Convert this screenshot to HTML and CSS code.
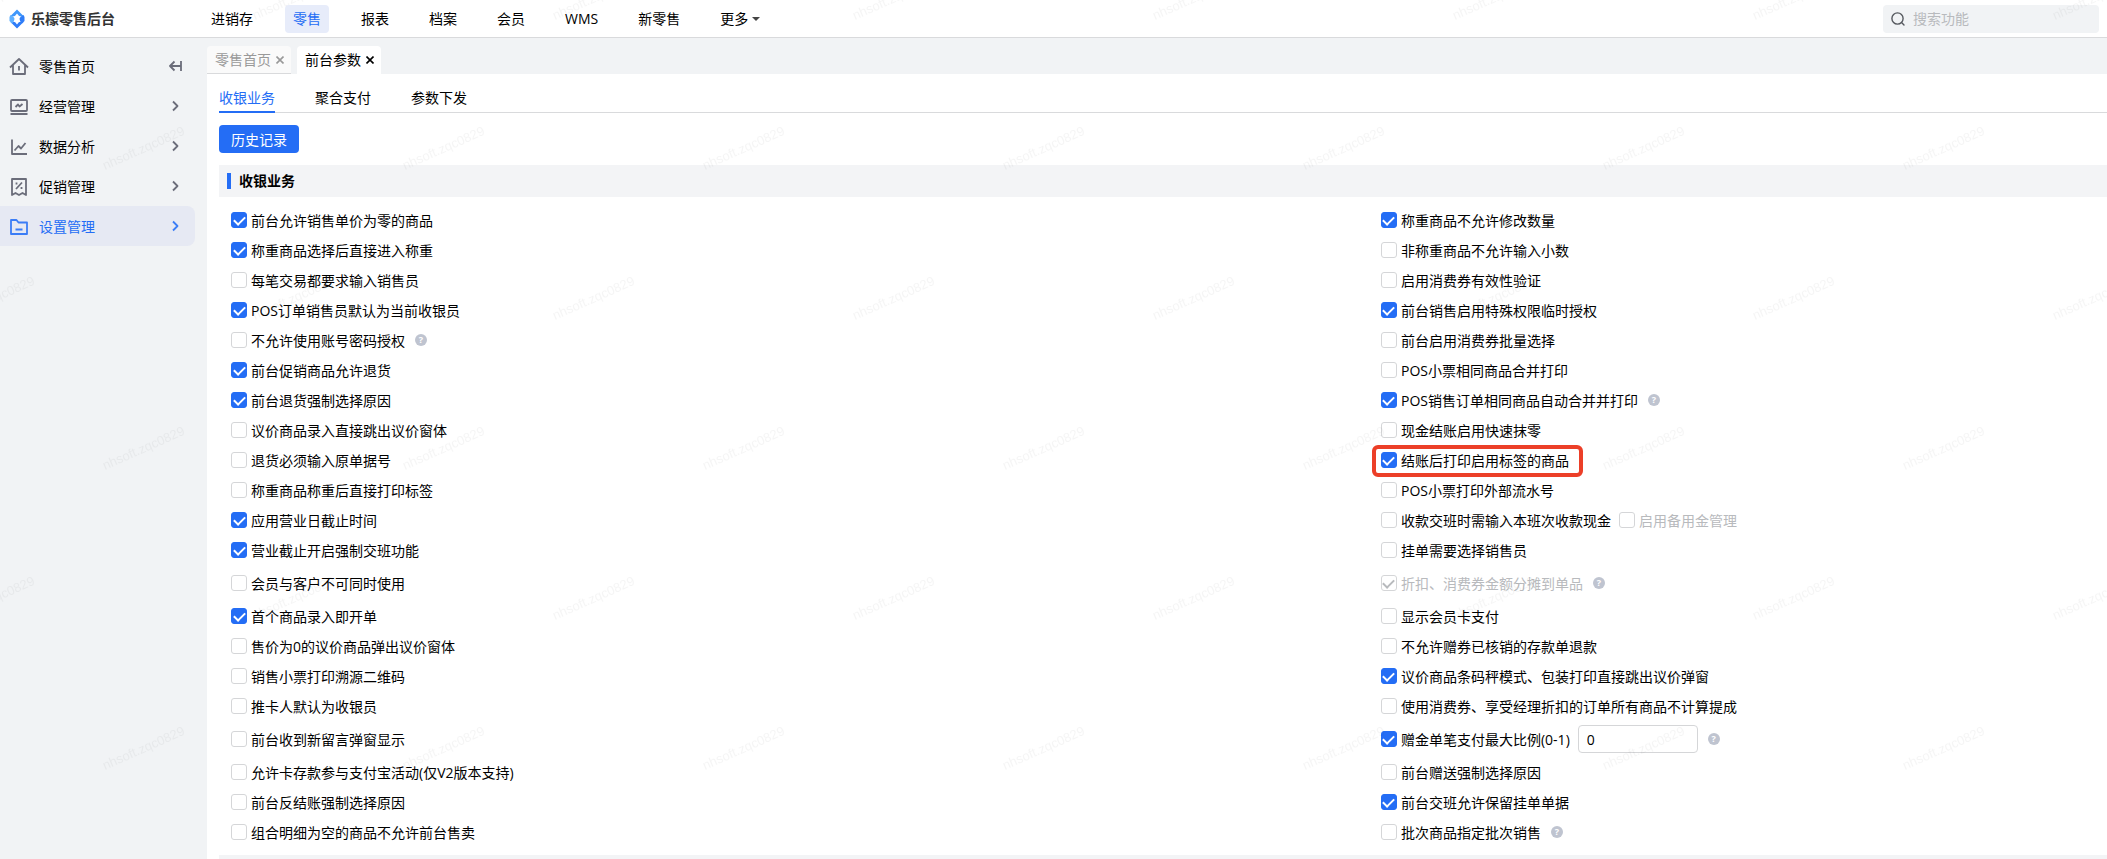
FILE: index.html
```html
<!DOCTYPE html>
<html lang="zh-CN">
<head>
    <meta charset="UTF-8">
    <meta name="viewport" content="width=device-width, initial-scale=1.0">
    <title>乐檬零售后台</title>
    <link rel="stylesheet" href="styles.css">
</head>
<body>
    <header class="header">
        <a class="logo" href="#">
            <svg width="16" height="20" viewBox="0 0 16 20">
                <path d="M8 0.5 L14.5 7 Q10 8.5 8 4.5 Q6 8.5 1.5 7 Z" fill="#3f97fb"/>
                <path d="M8 19.5 L1.5 13 Q6 11.5 8 15.5 Q10 11.5 14.5 13 Z" fill="#2f7df8"/>
                <path d="M1.5 6 Q5.5 8 5.5 10 Q5.5 12 3 14.5 L0.5 12 V8 Z" fill="#5fb0ff"/>
                <path d="M14.5 6 Q10.5 8 10.5 10 Q10.5 12 13 14.5 L15.5 12 V8 Z" fill="#2f7df8"/>
            </svg>
            <span>乐檬零售后台</span>
        </a>
        <nav class="nav">
            <a href="#">进销存</a>
            <a href="#" class="active">零售</a>
            <a href="#">报表</a>
            <a href="#">档案</a>
            <a href="#">会员</a>
            <a href="#">WMS</a>
            <a href="#">新零售</a>
            <a href="#">更多<span class="caret"></span></a>
        </nav>
        <div class="search">
            <svg width="14" height="14" viewBox="0 0 14 14" fill="none" stroke="#55585e" stroke-width="1.4" stroke-linecap="round">
                <circle cx="6.5" cy="6.5" r="5.6"/>
                <path d="M10.8 10.8 L13 13"/>
            </svg>
            <input type="text" placeholder="搜索功能" aria-label="搜索功能">
        </div>
    </header>

    <div class="body">
        <aside class="sidebar">
            <a href="#" class="menu-item">
                <svg class="icon" viewBox="0 0 20 20">
                    <path d="M1 11.5 L10 3 L19 11.5 M4 9 V18 H16 V9 M10 10 V14.5"/>
                </svg>
                <span>零售首页</span>
                <svg class="arrow" viewBox="0 0 14 14">
                    <path d="M12 2 V12 M12 7 H1 M5.5 2.5 L1 7 L5.5 11.5"/>
                </svg>
            </a>
            <a href="#" class="menu-item">
                <svg class="icon" viewBox="0 0 20 20">
                    <rect x="2" y="4" width="16" height="11" rx="1"/>
                    <path d="M1.5 18 H18.5 M6.5 11 L9 8.5 L10.5 10.5 L13.5 8"/>
                </svg>
                <span>经营管理</span>
                <svg class="arrow" viewBox="0 0 14 14"><path d="M4 2.5 L8.5 7 L4 11.5"/></svg>
            </a>
            <a href="#" class="menu-item">
                <svg class="icon" viewBox="0 0 20 20">
                    <path d="M3 3.5 V18 H18 M5.5 14.5 L9.5 10 L12 12.5 L16.5 7"/>
                </svg>
                <span>数据分析</span>
                <svg class="arrow" viewBox="0 0 14 14"><path d="M4 2.5 L8.5 7 L4 11.5"/></svg>
            </a>
            <a href="#" class="menu-item">
                <svg class="icon" viewBox="0 0 20 20">
                    <path d="M3 3 H17 V19 L13.5 17 L10 19 L6.5 17 L3 19 Z M7 13 L13 6.5 M7.5 6.5 V8.5 M12.5 11 V13"/>
                </svg>
                <span>促销管理</span>
                <svg class="arrow" viewBox="0 0 14 14"><path d="M4 2.5 L8.5 7 L4 11.5"/></svg>
            </a>
            <a href="#" class="menu-item active">
                <svg class="icon" viewBox="0 0 20 20">
                    <path d="M2 18 V4 H7.5 L9.5 6.5 H18 V18 Z M6.5 13.5 H13.5"/>
                </svg>
                <span>设置管理</span>
                <svg class="arrow" viewBox="0 0 14 14"><path d="M4 2.5 L8.5 7 L4 11.5"/></svg>
            </a>
        </aside>

        <main class="main">
            <div class="page-tabs">
                <a href="#" class="page-tab">零售首页
                    <svg viewBox="0 0 8 8"><path d="M0.5 0.5 L7.5 7.5 M7.5 0.5 L0.5 7.5"/></svg>
                </a>
                <a href="#" class="page-tab active">前台参数
                    <svg viewBox="0 0 8 8"><path d="M0.5 0.5 L7.5 7.5 M7.5 0.5 L0.5 7.5"/></svg>
                </a>
            </div>
            <div class="content">
                <div class="sub-tabs">
                    <a href="#" class="active">收银业务</a>
                    <a href="#">聚合支付</a>
                    <a href="#">参数下发</a>
                </div>
                <button type="button" class="btn">历史记录</button>
                <h2 class="section-title">收银业务</h2>
                <div class="params">
                    <ul>
                        <li><label><input type="checkbox" checked><span>前台允许销售单价为零的商品</span></label></li>
                        <li><label><input type="checkbox" checked><span>称重商品选择后直接进入称重</span></label></li>
                        <li><label><input type="checkbox"><span>每笔交易都要求输入销售员</span></label></li>
                        <li><label><input type="checkbox" checked><span>POS订单销售员默认为当前收银员</span></label></li>
                        <li><label><input type="checkbox"><span>不允许使用账号密码授权</span></label><i class="help">?</i></li>
                        <li><label><input type="checkbox" checked><span>前台促销商品允许退货</span></label></li>
                        <li><label><input type="checkbox" checked><span>前台退货强制选择原因</span></label></li>
                        <li><label><input type="checkbox"><span>议价商品录入直接跳出议价窗体</span></label></li>
                        <li><label><input type="checkbox"><span>退货必须输入原单据号</span></label></li>
                        <li><label><input type="checkbox"><span>称重商品称重后直接打印标签</span></label></li>
                        <li><label><input type="checkbox" checked><span>应用营业日截止时间</span></label></li>
                        <li><label><input type="checkbox" checked><span>营业截止开启强制交班功能</span></label></li>
                        <li class="tall"><label><input type="checkbox"><span>会员与客户不可同时使用</span></label></li>
                        <li><label><input type="checkbox" checked><span>首个商品录入即开单</span></label></li>
                        <li><label><input type="checkbox"><span>售价为0的议价商品弹出议价窗体</span></label></li>
                        <li><label><input type="checkbox"><span>销售小票打印溯源二维码</span></label></li>
                        <li><label><input type="checkbox"><span>推卡人默认为收银员</span></label></li>
                        <li class="tall"><label><input type="checkbox"><span>前台收到新留言弹窗显示</span></label></li>
                        <li><label><input type="checkbox"><span>允许卡存款参与支付宝活动(仅V2版本支持)</span></label></li>
                        <li><label><input type="checkbox"><span>前台反结账强制选择原因</span></label></li>
                        <li><label><input type="checkbox"><span>组合明细为空的商品不允许前台售卖</span></label></li>
                    </ul>
                    <ul>
                        <li><label><input type="checkbox" checked><span>称重商品不允许修改数量</span></label></li>
                        <li><label><input type="checkbox"><span>非称重商品不允许输入小数</span></label></li>
                        <li><label><input type="checkbox"><span>启用消费券有效性验证</span></label></li>
                        <li><label><input type="checkbox" checked><span>前台销售启用特殊权限临时授权</span></label></li>
                        <li><label><input type="checkbox"><span>前台启用消费券批量选择</span></label></li>
                        <li><label><input type="checkbox"><span>POS小票相同商品合并打印</span></label></li>
                        <li><label><input type="checkbox" checked><span>POS销售订单相同商品自动合并并打印</span></label><i class="help">?</i></li>
                        <li><label><input type="checkbox"><span>现金结账启用快速抹零</span></label></li>
                        <li><label class="marked"><input type="checkbox" checked><span>结账后打印启用标签的商品</span></label></li>
                        <li><label><input type="checkbox"><span>POS小票打印外部流水号</span></label></li>
                        <li>
                            <label><input type="checkbox"><span>收款交班时需输入本班次收款现金</span></label>
                            <label class="disabled"><input type="checkbox" disabled><span>启用备用金管理</span></label>
                        </li>
                        <li><label><input type="checkbox"><span>挂单需要选择销售员</span></label></li>
                        <li class="tall"><label class="disabled"><input type="checkbox" checked disabled><span>折扣、消费券金额分摊到单品</span></label><i class="help">?</i></li>
                        <li><label><input type="checkbox"><span>显示会员卡支付</span></label></li>
                        <li><label><input type="checkbox"><span>不允许赠券已核销的存款单退款</span></label></li>
                        <li><label><input type="checkbox" checked><span>议价商品条码秤模式、包装打印直接跳出议价弹窗</span></label></li>
                        <li><label><input type="checkbox"><span>使用消费券、享受经理折扣的订单所有商品不计算提成</span></label></li>
                        <li class="tall">
                            <label><input type="checkbox" checked><span>赠金单笔支付最大比例(0-1)</span></label>
                            <input type="text" class="ratio" value="0" aria-label="赠金单笔支付最大比例">
                            <i class="help">?</i>
                        </li>
                        <li><label><input type="checkbox"><span>前台赠送强制选择原因</span></label></li>
                        <li><label><input type="checkbox" checked><span>前台交班允许保留挂单单据</span></label></li>
                        <li><label><input type="checkbox"><span>批次商品指定批次销售</span></label><i class="help">?</i></li>
                    </ul>
                </div>
                <div class="section-title"></div>
            </div>
        </main>
    </div>

    <!-- user watermark over the whole window -->
    <svg class="watermark" width="100%" height="100%" aria-hidden="true">
        <defs>
            <pattern id="wm" width="300" height="300" patternUnits="userSpaceOnUse">
                <text transform="translate(105 170) rotate(-24)">nhsoft.zqc0829</text>
                <text transform="translate(-45 20) rotate(-24)">nhsoft.zqc0829</text>
                <text transform="translate(255 20) rotate(-24)">nhsoft.zqc0829</text>
                <text transform="translate(-45 320) rotate(-24)">nhsoft.zqc0829</text>
                <text transform="translate(255 320) rotate(-24)">nhsoft.zqc0829</text>
            </pattern>
        </defs>
        <rect width="100%" height="100%" fill="url(#wm)"/>
    </svg>
</body>
</html>
```
FILE: styles.css
```css
* {
    box-sizing: border-box;
}

body {
    margin: 0;
    height: 100vh;
    display: flex;
    flex-direction: column;
    overflow: hidden;
    font-family: "Open Sans", "Noto Sans CJK SC", sans-serif;
    font-size: 14px;
    line-height: 20px;
    color: #000;
    background: #fff;
}

a {
    color: inherit;
    text-decoration: none;
}

input,
button {
    font: inherit;
}

/* header */
.header {
    flex: none;
    display: flex;
    align-items: center;
    height: 38px;
    padding: 0 8px 0 9px;
    border-bottom: 1px solid #d9dadc;
}

.logo {
    display: flex;
    align-items: center;
    gap: 6px;
    width: 194px;
    font-weight: bold;
    color: #333;
}

.nav {
    flex: 1;
    display: flex;
    gap: 24px;
}

.nav a {
    display: flex;
    align-items: center;
    height: 28px;
    padding: 0 8px;
    border-radius: 4px;
}

.nav .active {
    color: #246df5;
    background: #e7ecfa;
}

.caret {
    margin-left: 4px;
    border: 4px solid transparent;
    border-top-color: #444;
    border-bottom: 0;
}

.search {
    display: flex;
    align-items: center;
    gap: 8px;
    width: 216px;
    height: 28px;
    padding: 0 8px;
    border-radius: 4px;
    background: #f1f3f5;
}

.search input {
    flex: 1;
    min-width: 0;
    padding: 0;
    border: 0;
    outline: 0;
    background: none;
}

.search input::placeholder {
    color: #b8babd;
}

.body {
    flex: 1;
    display: flex;
    min-height: 0;
}

/* sidebar */
.sidebar {
    flex: none;
    width: 207px;
    padding: 8px 12px 0 0;
    background: #f1f3f5;
}

.menu-item {
    display: flex;
    align-items: center;
    height: 40px;
    padding: 0 12px 0 9px;
    border-radius: 0 8px 8px 0;
}

.menu-item span {
    flex: 1;
    margin-left: 10px;
    padding-top: 2px;
}

.menu-item.active {
    color: #246df5;
    background: #e6e9f3;
}

.menu-item svg {
    fill: none;
    stroke: #6b6d7a;
    stroke-width: 1.8;
    stroke-linejoin: round;
}

.menu-item.active svg {
    stroke: #3b7df6;
}

.icon {
    width: 20px;
    height: 20px;
}

.arrow {
    width: 14px;
    height: 14px;
}

/* opened pages */
.main {
    flex: 1;
    display: flex;
    flex-direction: column;
    min-width: 0;
}

.page-tabs {
    flex: none;
    display: flex;
    gap: 6px;
    padding-top: 8px;
    background: #f1f3f5;
}

.page-tab {
    display: flex;
    align-items: center;
    gap: 5px;
    height: 28px;
    padding: 0 7px 0 8px;
    border-radius: 4px 4px 0 0;
    border-bottom: 1px solid #d9dadc;
    color: #999;
    background: #fafafa;
}

.page-tab.active {
    color: #000;
    border-bottom-color: #fff;
    background: #fff;
}

.page-tab svg {
    width: 8px;
    height: 8px;
    stroke: currentColor;
    stroke-width: 1.6;
}

.content {
    flex: 1;
    min-height: 0;
    padding-left: 12px;
    overflow: hidden;
}

.sub-tabs {
    display: flex;
    gap: 40px;
    height: 39px;
    border-bottom: 1px solid #d9dadc;
}

.sub-tabs a {
    height: 39px;
    padding-top: 14px;
}

.sub-tabs .active {
    color: #246df5;
    border-bottom: 2px solid #246df5;
}

.btn {
    display: block;
    width: 80px;
    height: 28px;
    margin: 12px 0;
    padding: 2px 0 0;
    border: 0;
    border-radius: 4px;
    color: #fff;
    background: #246df5;
}

.section-title {
    display: flex;
    align-items: center;
    height: 32px;
    margin: 0;
    padding-left: 8px;
    font-size: 14px;
    background: #f3f4f6;
}

.section-title::before {
    content: "";
    width: 4px;
    height: 16px;
    margin-right: 8px;
    background: #246df5;
}

/* params */
.params {
    display: grid;
    grid-template-columns: 61.3% 1fr;
    padding: 8px 0 8px 12px;
}

.params ul {
    margin: 0;
    padding: 0;
    list-style: none;
}

.params li {
    display: flex;
    align-items: center;
    height: 30px;
    white-space: nowrap;
}

.params li.tall {
    height: 36px;
}

.params label {
    position: relative;
    display: flex;
    align-items: center;
    gap: 4px;
}

.params label span {
    padding-top: 2px;
}

.params label + label,
.ratio {
    margin-left: 8px;
}

.params .disabled {
    color: #b8babd;
}

.params input[type="checkbox"] {
    appearance: none;
    display: flex;
    align-items: center;
    justify-content: center;
    width: 16px;
    height: 16px;
    margin: 0;
    border: 1px solid #d5d6d8;
    border-radius: 3px;
    background: #fff;
}

.params input[type="checkbox"]:checked {
    border-color: #246df5;
    background: #246df5;
}

.params input:checked::before {
    content: "";
    width: 5px;
    height: 9px;
    margin-bottom: 2px;
    border: solid #fff;
    border-width: 0 2px 2px 0;
    transform: rotate(45deg);
}

.params input[type="checkbox"]:disabled:checked {
    border-color: #d5d6d8;
    background: #fff;
}

.params input:disabled:checked::before {
    border-color: #b8babd;
}

.marked::after {
    content: "";
    position: absolute;
    inset: -4px -14px -6px -9px;
    border: 4px solid #ec3f28;
    border-radius: 6px;
}

.ratio {
    width: 120px;
    height: 28px;
    padding: 0 8px;
    border: 1px solid #d5d6d8;
    border-radius: 4px;
}

.help {
    width: 12px;
    height: 12px;
    margin-left: 10px;
    border-radius: 50%;
    font-size: 9px;
    font-style: normal;
    font-weight: bold;
    line-height: 12px;
    text-align: center;
    color: #fff;
    background: #bfc4d0;
}

.watermark {
    position: fixed;
    inset: 0;
    pointer-events: none;
}

.watermark text {
    font-family: "Liberation Sans", sans-serif;
    font-size: 13px;
    fill: rgba(0, 0, 0, 0.04);
}
```
